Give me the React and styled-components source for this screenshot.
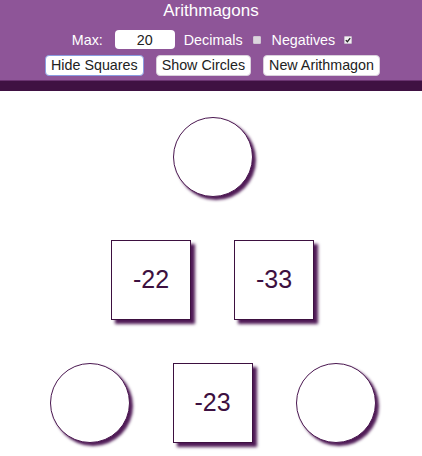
import React, { useState } from 'react'
import styled, { createGlobalStyle } from 'styled-components'

const GlobalStyle = createGlobalStyle`
  body {
    margin: 0;
    background: #fff;
    font-family: "Liberation Sans", Arial, sans-serif;
  }
`

const Header = styled.header`
  background: #8e5598;
  border-bottom: 10px solid #3f1142;
  box-shadow: inset 0 -1px 0 #6a3370;
  padding-bottom: 5px;
  color: #fff;
  text-align: center;
`

const Title = styled.h1`
  margin: 0;
  font-size: 17px;
  font-weight: normal;
  line-height: 22px;
`

const Controls = styled.div`
  display: flex;
  justify-content: center;
  align-items: center;
  margin-top: 8px;
  margin-left: 2px;
  height: 19px;
  font-size: 14.3px;
`

const Label = styled.span`
  margin-right: ${(p) => p.gap || 0}px;
`

const MaxInput = styled.input`
  box-sizing: border-box;
  width: 60px;
  height: 19px;
  border: none;
  border-radius: 4px;
  background: #fff;
  color: #222;
  font-family: inherit;
  font-size: 14.3px;
  text-align: center;
  padding: 0;
  margin-right: 9px;
  outline: none;
`

const Check = styled.span`
  box-sizing: border-box;
  display: inline-flex;
  align-items: center;
  justify-content: center;
  width: 8px;
  height: 8px;
  margin-right: ${(p) => p.gap || 0}px;
  background: ${(p) => (p.checked ? '#f2eef3' : '#dcd6de')};
  border: 1px solid ${(p) => (p.checked ? '#c8bccb' : '#cfc6d2')};
  border-radius: 1px;
  cursor: pointer;
`

const Buttons = styled.div`
  display: flex;
  justify-content: center;
  gap: 12px;
  margin-top: 6px;
  margin-left: 3px;
`

const Button = styled.button`
  box-sizing: border-box;
  height: 21px;
  padding: 0 5px;
  background: #fff;
  color: #222;
  border: 1px solid ${(p) => (p.active ? '#8a9ce0' : '#d9d0dc')};
  border-radius: 4px;
  font-family: "Liberation Sans", Arial, sans-serif;
  font-size: 14.3px;
  line-height: 19px;
  cursor: pointer;
`

const Diagram = styled.main`
  display: grid;
  grid-template-columns: repeat(6, 61.5px);
  grid-template-rows: repeat(3, 123px);
  margin-left: 28px;
  padding-top: 4px;
`

const Cell = styled.div`
  grid-column: ${(p) => p.col} / span 2;
  grid-row: ${(p) => p.row};
  justify-self: center;
  align-self: center;
`

const Circle = styled.div`
  box-sizing: border-box;
  width: 80px;
  height: 80px;
  border: 1px solid #4a1750;
  border-radius: 50%;
  background: #fff;
  box-shadow: 3px 3px 3px #4f1a56;
`

const Square = styled.div`
  box-sizing: border-box;
  width: 80px;
  height: 80px;
  display: flex;
  align-items: center;
  justify-content: center;
  border: 1px solid #3d1040;
  background: #fff;
  box-shadow: 4px 4px 3px #4f1a56;
  color: #3d1040;
  font-size: 25px;
`

const CheckMark = () => (
  <svg width="6" height="6" viewBox="0 0 6 6">
    <path d="M0.8 3.1 L2.4 4.7 L5.2 1.2" fill="none" stroke="#222" strokeWidth="1.3" />
  </svg>
)

const nodes = [
  { kind: 'circle', col: 3, row: 1 },
  { kind: 'square', col: 2, row: 2, value: -22 },
  { kind: 'square', col: 4, row: 2, value: -33 },
  { kind: 'circle', col: 1, row: 3 },
  { kind: 'square', col: 3, row: 3, value: -23 },
  { kind: 'circle', col: 5, row: 3 },
]

export default function App() {
  const [max, setMax] = useState('20')
  const [decimals, setDecimals] = useState(false)
  const [negatives, setNegatives] = useState(true)

  return (
    <>
      <GlobalStyle />
      <Header>
        <Title>Arithmagons</Title>
        <Controls>
          <Label gap={12}>Max:</Label>
          <MaxInput value={max} onChange={(e) => setMax(e.target.value)} />
          <Label gap={10}>Decimals</Label>
          <Check gap={11} checked={decimals} onClick={() => setDecimals(!decimals)}>
            {decimals && <CheckMark />}
          </Check>
          <Label gap={9}>Negatives</Label>
          <Check checked={negatives} onClick={() => setNegatives(!negatives)}>
            {negatives && <CheckMark />}
          </Check>
        </Controls>
        <Buttons>
          <Button active>Hide Squares</Button>
          <Button>Show Circles</Button>
          <Button>New Arithmagon</Button>
        </Buttons>
      </Header>
      <Diagram>
        {nodes.map((n, i) => (
          <Cell key={i} col={n.col} row={n.row}>
            {n.kind === 'circle' ? <Circle /> : <Square>{n.value}</Square>}
          </Cell>
        ))}
      </Diagram>
    </>
  )
}
